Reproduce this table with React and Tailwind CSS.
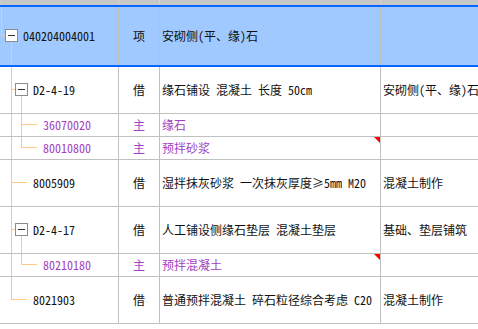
import React from "react";

const OR = "#ffc880";

const rows = [
  { kind: "sel", code: "040204004001", type: "项", desc: "安砌侧(平、缘)石", extra: "", tree: "root" },
  { kind: "tall", code: "D2-4-19", type: "借", desc: "缘石铺设 混凝土 长度 50cm", extra: "安砌侧(平、缘)石", tree: "box" },
  { kind: "short", code: "36070020", type: "主", purple: true, desc: "缘石", extra: "", tree: "childMid" },
  { kind: "short", code: "80010800", type: "主", purple: true, desc: "预拌砂浆", extra: "", tree: "childLast", flag: true },
  { kind: "tall", code: "8005909", type: "借", desc: "湿拌抹灰砂浆 一次抹灰厚度≥5mm M20", extra: "混凝土制作", tree: "leaf" },
  { kind: "tall", code: "D2-4-17", type: "借", desc: "人工铺设侧缘石垫层 混凝土垫层", extra: "基础、垫层铺筑", tree: "box" },
  { kind: "short", code: "80210180", type: "主", purple: true, desc: "预拌混凝土", extra: "", tree: "childLast", flag: true },
  { kind: "tall", code: "8021903", type: "借", desc: "普通预拌混凝土 碎石粒径综合考虑 C20", extra: "混凝土制作", tree: "leafLast" },
];

function L({ x1, y1, x2, y2 }) {
  return <line x1={x1} y1={y1} x2={x2} y2={y2} stroke={OR} strokeWidth="1" />;
}

function Box({ x, y }) {
  return (
    <g>
      <rect x={x + 0.5} y={y + 0.5} width="12" height="12" fill="#ffffff" stroke="#8c8c8c" strokeWidth="1" />
      <line x1={x + 3} y1={y + 6.5} x2={x + 10} y2={y + 6.5} stroke="#333333" strokeWidth="1" />
    </g>
  );
}

function Tree({ tree, h }) {
  let content = null;
  if (tree === "root") {
    content = (
      <>
        <L x1={1.5} y1={0} x2={1.5} y2={29} />
        <L x1={1} y1={28.5} x2={5} y2={28.5} />
        <L x1={11.5} y1={35} x2={11.5} y2={h} />
        <Box x={5} y={22} />
      </>
    );
  } else if (tree === "box") {
    content = (
      <>
        <L x1={11.5} y1={0} x2={11.5} y2={h} />
        <L x1={11} y1={22.5} x2={15} y2={22.5} />
        <L x1={21.5} y1={29} x2={21.5} y2={h} />
        <Box x={15} y={16} />
      </>
    );
  } else if (tree === "childMid") {
    content = (
      <>
        <L x1={11.5} y1={0} x2={11.5} y2={h} />
        <L x1={21.5} y1={0} x2={21.5} y2={h} />
        <L x1={21} y1={10.5} x2={37} y2={10.5} />
      </>
    );
  } else if (tree === "childLast") {
    content = (
      <>
        <L x1={11.5} y1={0} x2={11.5} y2={h} />
        <L x1={21.5} y1={0} x2={21.5} y2={11} />
        <L x1={21} y1={10.5} x2={37} y2={10.5} />
      </>
    );
  } else if (tree === "leaf") {
    content = (
      <>
        <L x1={11.5} y1={0} x2={11.5} y2={h} />
        <L x1={11} y1={22.5} x2={27} y2={22.5} />
      </>
    );
  } else {
    content = (
      <>
        <L x1={11.5} y1={0} x2={11.5} y2={23} />
        <L x1={11} y1={22.5} x2={27} y2={22.5} />
      </>
    );
  }
  return (
    <svg
      className="absolute left-0 top-0 pointer-events-none"
      width="118"
      height={h}
      viewBox={`0 0 118 ${h}`}
      shapeRendering="crispEdges"
    >
      {content}
    </svg>
  );
}

const padFor = {
  root: "pl-[23px]",
  box: "pl-[33px]",
  childMid: "pl-[43px]",
  childLast: "pl-[43px]",
  leaf: "pl-[33px]",
  leafLast: "pl-[33px]",
};

function Row({ r }) {
  const rowCls =
    r.kind === "sel"
      ? "h-[62px] border-y-2 border-[#0066ff] bg-[#9fc9ff]"
      : r.kind === "tall"
      ? "h-[47px] border-b border-[#c0c0c0] bg-white"
      : "h-[23px] border-b border-[#c0c0c0] bg-white";
  const h = r.kind === "sel" ? 58 : r.kind === "tall" ? 46 : 22;
  const color = r.purple ? "text-[#a33fc0]" : "text-[#111111]";
  return (
    <div className={"flex shrink-0 " + rowCls}>
      <div className={"relative w-[119px] shrink-0 border-r border-[#c0c0c0] flex items-center " + padFor[r.tree]}>
        <Tree tree={r.tree} h={h} />
        <span className={"relative whitespace-nowrap " + color}>{r.code}</span>
      </div>
      <div className={"w-[41px] shrink-0 border-r border-[#c0c0c0] flex items-center justify-center " + color}>
        {r.type}
      </div>
      <div className={"relative w-[221px] shrink-0 border-r border-[#c0c0c0] flex items-center pl-[2px] overflow-hidden " + color}>
        <span className="whitespace-nowrap">{r.desc}</span>
        {r.flag && (
          <div className="absolute top-0 right-0 w-0 h-0 border-t-[6px] border-t-[#ff0000] border-l-[6px] border-l-transparent" />
        )}
      </div>
      <div className="flex-1 min-w-0 flex items-center pl-[2px] overflow-hidden text-[#111111]">
        <span className="whitespace-nowrap">{r.extra}</span>
      </div>
    </div>
  );
}

export default function App() {
  return (
    <div
      className="w-[478px] h-[329px] overflow-hidden bg-white flex flex-col text-[12px] leading-[14px]"
      style={{ fontFamily: '"Noto Sans Mono CJK SC", "Noto Sans CJK SC", sans-serif' }}
    >
      <div className="h-[5px] shrink-0 flex bg-[#c8c8c8]">
        <div className="w-[119px] shrink-0 border-r border-[#d4d4d4] flex pl-[1px]">
          <div className="w-px bg-[#ffc880]" />
        </div>
        <div className="w-[41px] shrink-0 border-r border-[#d4d4d4]" />
        <div className="w-[221px] shrink-0 border-r border-[#d4d4d4]" />
        <div className="flex-1" />
      </div>
      {rows.map((r, i) => (
        <Row key={i} r={r} />
      ))}
    </div>
  );
}
